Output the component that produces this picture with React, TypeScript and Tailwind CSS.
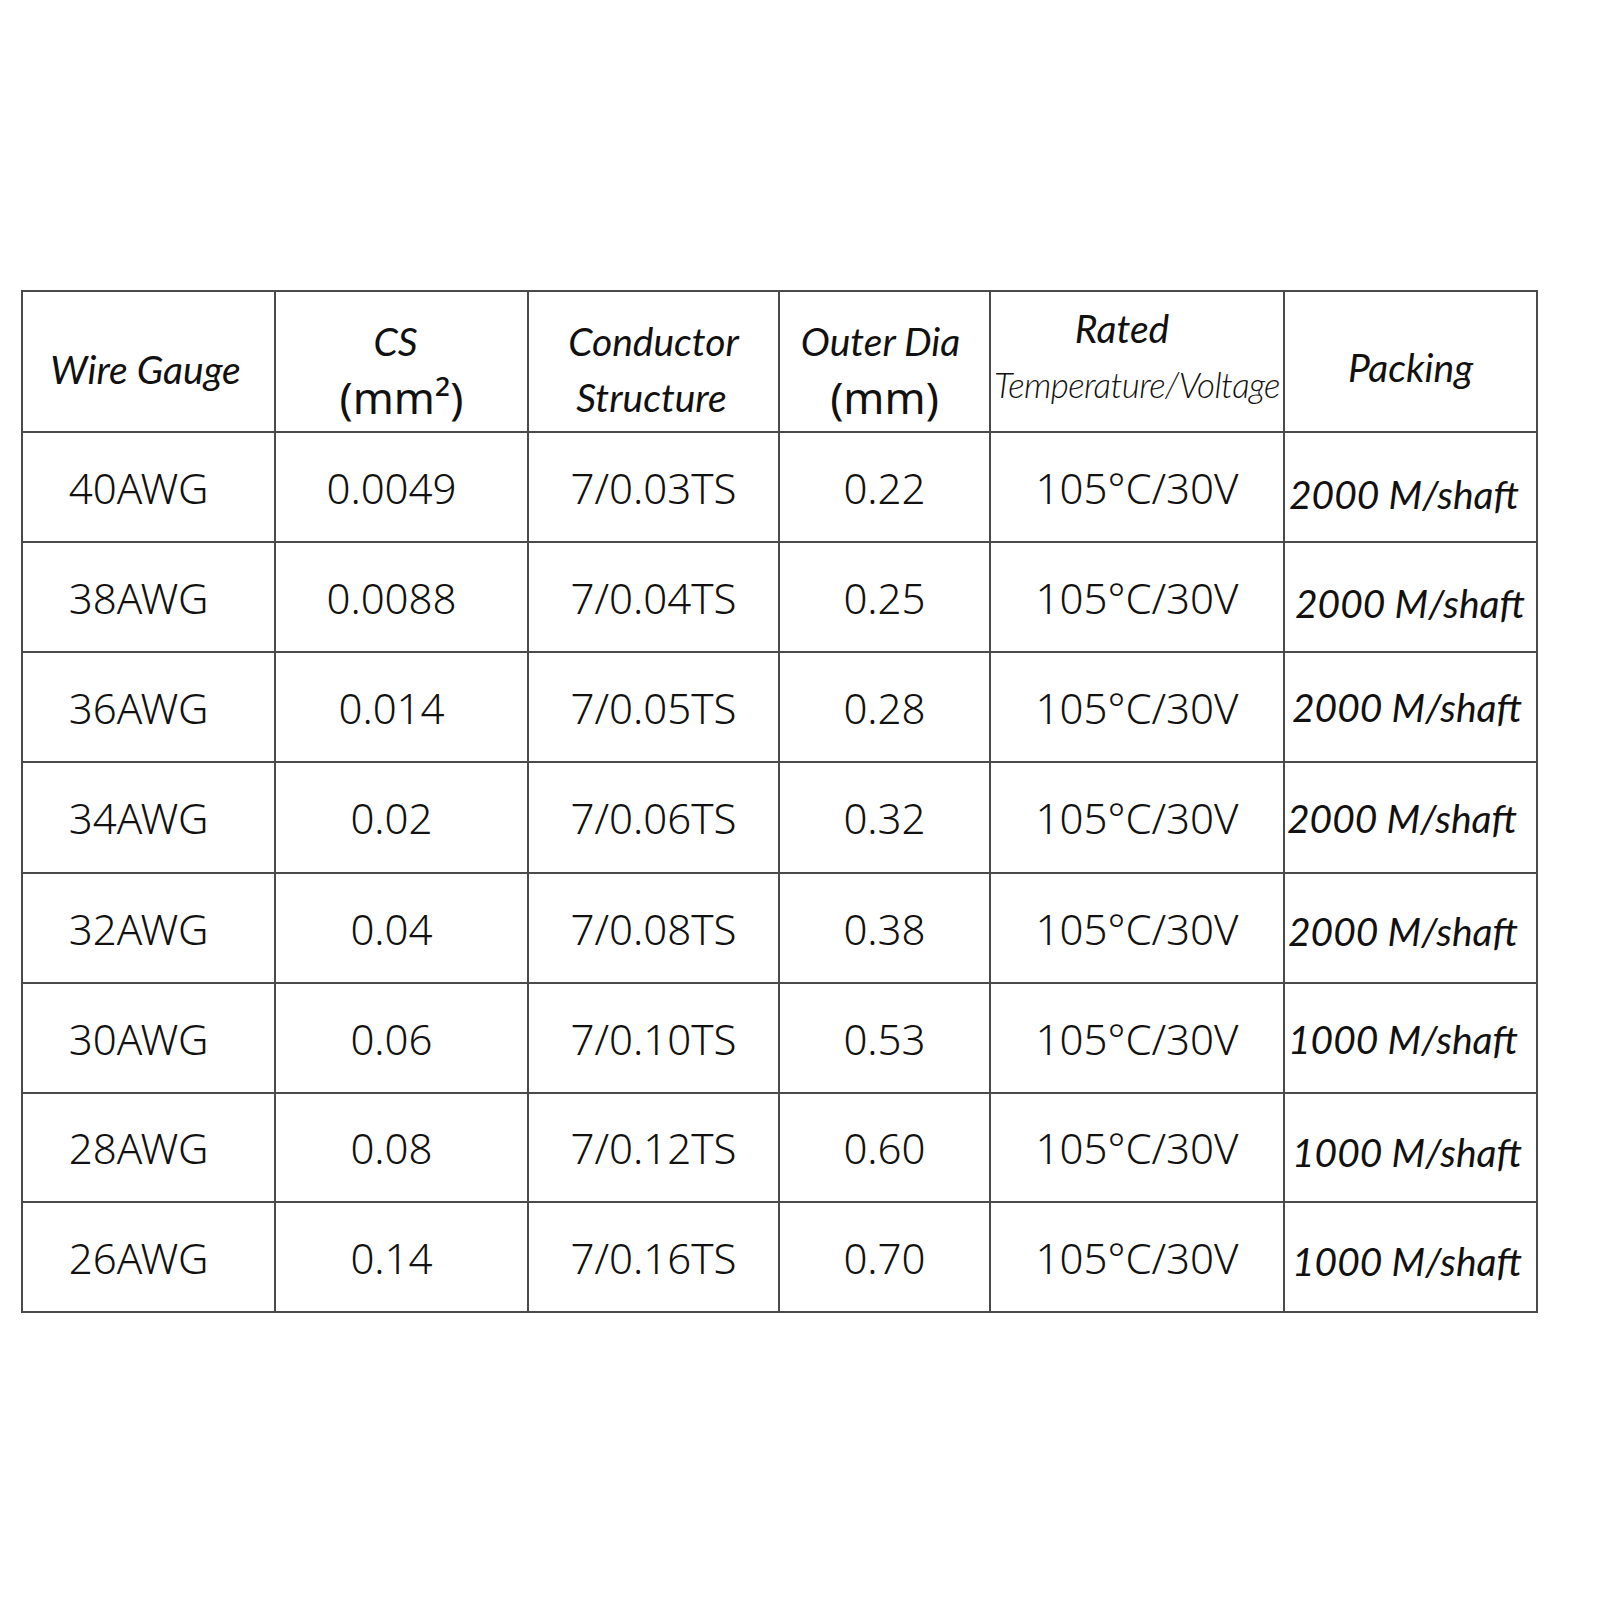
const rows = [
  { g: "40AWG", cs: "0.0049", st: "7/0.03TS", od: "0.22", pk: "2000 M/shaft", h: "h-[110px]", pad: "pl-[4px] pt-[14px]" },
  { g: "38AWG", cs: "0.0088", st: "7/0.04TS", od: "0.25", pk: "2000 M/shaft", h: "h-[110px]", pad: "pl-[10px] pt-[12px]" },
  { g: "36AWG", cs: "0.014", st: "7/0.05TS", od: "0.28", pk: "2000 M/shaft", h: "h-[110px]", pad: "pl-[7px] pt-[0px]" },
  { g: "34AWG", cs: "0.02", st: "7/0.06TS", od: "0.32", pk: "2000 M/shaft", h: "h-[111px]", pad: "pl-[2px] pt-[0px]" },
  { g: "32AWG", cs: "0.04", st: "7/0.08TS", od: "0.38", pk: "2000 M/shaft", h: "h-[110px]", pad: "pl-[3px] pt-[6px]" },
  { g: "30AWG", cs: "0.06", st: "7/0.10TS", od: "0.53", pk: "1000 M/shaft", h: "h-[110px]", pad: "pl-[3px] pt-[2px]" },
  { g: "28AWG", cs: "0.08", st: "7/0.12TS", od: "0.60", pk: "1000 M/shaft", h: "h-[109px]", pad: "pl-[7px] pt-[8px]" },
  { g: "26AWG", cs: "0.14", st: "7/0.16TS", od: "0.70", pk: "1000 M/shaft", h: "h-[110px]", pad: "pl-[7px] pt-[8px]" },
];

const head = "font-['Lato','Liberation_Sans',sans-serif] italic font-normal text-[39px] leading-[56px] text-[#111] whitespace-nowrap";
const sans = "font-['Noto_Sans','Liberation_Sans',sans-serif] text-[44px] leading-[56px] text-[#111] whitespace-nowrap";
const data = "font-['Noto_Sans','Liberation_Sans',sans-serif] font-light text-[42px] text-[#111] whitespace-nowrap";
const cell = "border-r-2 border-b-2 border-[#4a4a4a] flex flex-col items-center justify-center";

export default function App() {
  return (
    <div className="w-[1600px] h-[1600px] bg-white pt-[290px] pl-[21px]">
      <div className="grid grid-cols-[253px_253px_251px_211px_294px_253px] w-[1517px] border-l-2 border-t-2 border-[#4a4a4a]">
        {/* header */}
        <div className={`${cell} h-[141px] pt-[14px] pr-[6px]`}>
          <span className={head}>Wire Gauge</span>
        </div>
        <div className={`${cell} pt-[14px]`}>
          <span className={`${head} pr-[12px]`}>CS</span>
          <span className={sans}>(mm²)</span>
        </div>
        <div className={`${cell} pt-[14px]`}>
          <span className={head}>Conductor</span>
          <span className={`${head} pr-[4px]`}>Structure</span>
        </div>
        <div className={`${cell} pt-[14px]`}>
          <span className={`${head} pr-[8px]`}>Outer Dia</span>
          <span className={sans}>(mm)</span>
        </div>
        <div className={`${cell} pb-[12px]`}>
          <span className={`${head} pr-[30px]`}>Rated</span>
          <span className="font-['Lato','Liberation_Sans',sans-serif] italic font-light text-[35px] tracking-[-0.6px] leading-[56px] text-[#111] whitespace-nowrap">
            Temperature/Voltage
          </span>
        </div>
        <div className={`${cell} pt-[10px]`}>
          <span className={head}>Packing</span>
        </div>

        {rows.map((r) => (
          <div key={r.g} className="contents">
            <div className={`${cell} ${r.h} pr-[20px]`}>
              <span className={data}>{r.g}</span>
            </div>
            <div className={`${cell} pr-[20px]`}>
              <span className={data}>{r.cs}</span>
            </div>
            <div className={cell}>
              <span className={data}>{r.st}</span>
            </div>
            <div className={cell}>
              <span className={data}>{r.od}</span>
            </div>
            <div className={cell}>
              <span className={data}>105°C/30V</span>
            </div>
            <div className={`${cell} !items-start ${r.pad}`}>
              <span className={head}>{r.pk}</span>
            </div>
          </div>
        ))}
      </div>
    </div>
  );
}
